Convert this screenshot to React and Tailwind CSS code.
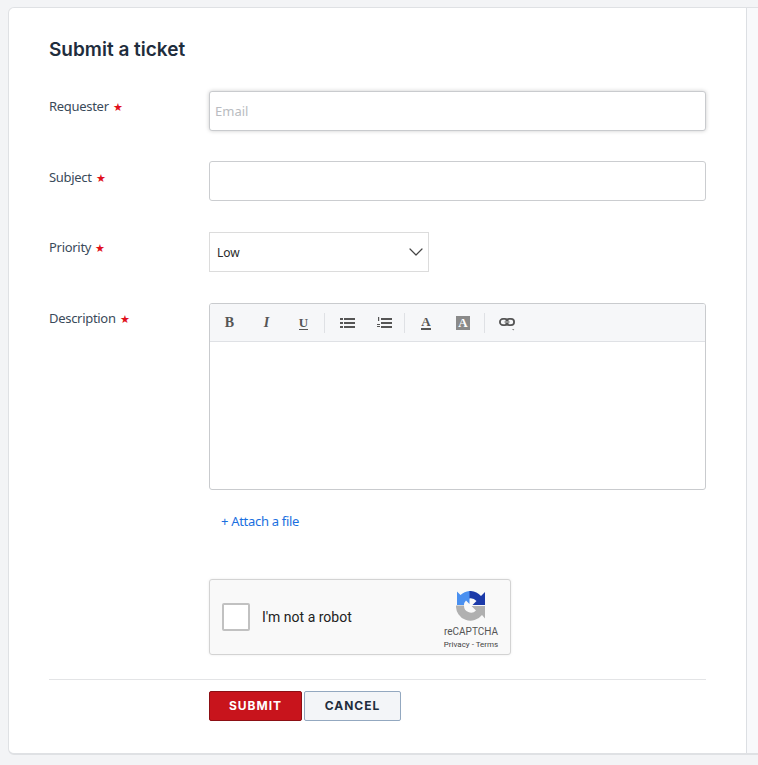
import React from "react";
import { ChevronDown } from "lucide-react";

const body = { fontFamily: '"Noto Sans", sans-serif' };

function Label({ children, extra = "pt-[5px]" }) {
  return (
    <div className={`w-40 shrink-0 ${extra} text-[13px] leading-5 tracking-[-0.3px] text-[#3a4a5a]`}>
      {children}
      <span className="ml-[4px] text-[11px] text-[#e0101c]">★</span>
    </div>
  );
}

function Tool({ children, w = "w-[37px]" }) {
  return <span className={`flex h-full ${w} items-center justify-center text-[#555]`}>{children}</span>;
}

const serif = { fontFamily: '"Liberation Serif", serif' };

function BulletIcon() {
  return (
    <svg width="15" height="10" viewBox="0 0 15 10" fill="#555">
      <rect x="0" y="0" width="3" height="2" />
      <rect x="4" y="0" width="11" height="2" />
      <rect x="0" y="4" width="3" height="2" />
      <rect x="4" y="4" width="11" height="2" />
      <rect x="0" y="8" width="3" height="2" />
      <rect x="4" y="8" width="11" height="2" />
    </svg>
  );
}

function NumberIcon() {
  return (
    <svg width="15" height="11" viewBox="0 0 15 11" fill="#555">
      <rect x="1" y="0" width="1.2" height="4" />
      <rect x="0" y="7" width="3" height="1" />
      <rect x="0" y="9" width="3" height="1" />
      <rect x="4" y="1" width="11" height="2" />
      <rect x="4" y="5" width="11" height="2" />
      <rect x="4" y="9" width="11" height="2" />
    </svg>
  );
}

function LinkIcon() {
  return (
    <svg width="16" height="14" viewBox="0 0 16 14" fill="none">
      <rect x="0.9" y="1.9" width="8" height="6.2" rx="3.1" stroke="#555" strokeWidth="1.8" />
      <rect x="7.1" y="1.9" width="8" height="6.2" rx="3.1" stroke="#555" strokeWidth="1.8" />
      <path d="M5 5h6" stroke="#f6f7f9" strokeWidth="1.6" />
      <path d="M5.5 5h5" stroke="#555" strokeWidth="1.2" />
      <path d="M13 12h2.4l-1.2 1.5z" fill="#888" />
    </svg>
  );
}

function RecaptchaLogo() {
  return (
    <svg width="30" height="30" viewBox="0 0 30 30">
      <path d="M0 14.5 A14.5 14.5 0 0 0 26 24 L29 27.5 V15 H15.5 L20 19.5 A7 7 0 0 1 8 14.5 Z" fill="#b0b0b0" />
      <path d="M13 0 A15 15 0 0 1 25 5 L29 1 V14 H16.5 L20.5 10 A8 8 0 0 0 13 7.5 Z" fill="#1c3aa9" />
      <path d="M13.5 0 A15 15 0 0 0 4.5 4 L1 0.5 V14 H8 A7 7 0 0 1 10 9.5 L13.5 13 V0 Z" fill="#4a90f0" />
    </svg>
  );
}

export default function App() {
  return (
    <div className="h-[765px] w-[758px] overflow-hidden bg-[#f3f4f6] pl-2 pt-[7px]" style={body}>
      <div className="flex h-[748px] w-[770px] overflow-hidden rounded-md border border-b-2 border-[#dfe1e4] bg-white">
        <div className="w-[738px] shrink-0 border-r border-[#dcdfe3] px-10 pt-[28px]">
          <h1
            className="text-[19px] leading-7 font-semibold text-[#1f2d3d]"
            style={{ fontFamily: "Inter, sans-serif" }}
          >
            Submit a ticket
          </h1>

          <div className="mt-[27px] flex">
            <Label>Requester</Label>
            <input
              placeholder="Email"
              className="h-10 w-[497px] rounded-[3px] border border-[#c9cbce] bg-white px-[5px] text-[13px] shadow-[0_0_4px_rgba(0,0,0,0.2)] outline-none placeholder:text-[#b9bcc1]"
            />
          </div>

          <div className="mt-[30px] flex">
            <Label extra="pt-[6px]">Subject</Label>
            <div className="h-10 w-[497px] rounded-[3px] border border-[#cbcdd0]" />
          </div>

          <div className="mt-[31px] flex">
            <Label>Priority</Label>
            <div className="flex h-10 w-[220px] items-center justify-between border border-[#dcdcdc] pl-[7px] text-xs text-[#2b2b2b]">
              <span className="pt-[2px]">Low</span>
              <ChevronDown size={24} strokeWidth={1.2} className="text-[#444]" />
            </div>
          </div>

          <div className="mt-[31px] flex">
            <Label>Description</Label>
            <div className="h-[187px] w-[497px] overflow-hidden rounded-[3px] border border-[#c9cbce]">
              <div className="flex h-[38px] items-center border-b border-[#dfe1e5] bg-[#f6f7f9] pl-[1px]">
                <Tool><span className="text-sm font-bold" style={serif}>B</span></Tool>
                <Tool><span className="text-sm font-bold italic" style={serif}>I</span></Tool>
                <Tool><span className="border-b border-[#555] text-[13px] leading-[13px] font-bold" style={serif}>U</span></Tool>
                <span className="ml-[2px] h-5 w-px bg-[#dfe1e5]" />
                <Tool w="w-[44px]"><BulletIcon /></Tool>
                <Tool w="w-[30px]"><NumberIcon /></Tool>
                <span className="ml-[5px] h-5 w-px bg-[#dfe1e5]" />
                <Tool w="w-[42px]">
                  <span className="border-b-2 border-[#555] text-[13px] leading-[13px] font-bold" style={serif}>A</span>
                </Tool>
                <Tool w="w-[32px]">
                  <span className="flex h-[14px] w-[14px] items-center justify-center bg-[#8a8a8a] text-[13px] font-bold text-white" style={serif}>A</span>
                </Tool>
                <span className="ml-[5px] h-5 w-px bg-[#dfe1e5]" />
                <span className="ml-[14px] mt-[3px] flex"><LinkIcon /></span>
              </div>
            </div>
          </div>

          <div className="ml-[172px] mt-[21px] text-[13px] leading-5 tracking-[-0.3px] text-[#1a6fe0]">+ Attach a file</div>

          <div className="ml-40 mt-12 flex h-[76px] w-[302px] items-center rounded-[3px] border border-[#d3d3d3] bg-[#f9f9f9] pl-3 pr-[11px] shadow-[0_0_3px_rgba(0,0,0,0.08)]" style={{ fontFamily: "Roboto, sans-serif" }}>
            <div className="h-7 w-7 rounded-[2px] border-2 border-[#c1c1c1] bg-white" />
            <span className="ml-3 text-sm text-[#222]">I'm not a robot</span>
            <div className="ml-auto flex w-[56px] flex-col items-center pt-[6px]">
              <RecaptchaLogo />
              <span className="mt-[5px] text-[10px] leading-3 text-[#555]">reCAPTCHA</span>
              <span className="mt-[2px] text-[8px] leading-[10px] whitespace-nowrap text-[#444]">Privacy - Terms</span>
            </div>
          </div>

          <div className="mt-6 border-t border-[#e3e4e6]" />

          <div className="ml-40 mt-[11px] flex gap-[2px]" style={{ fontFamily: "Inter, sans-serif" }}>
            <button className="h-[30px] w-[93px] rounded-[2px] border border-[#8c0f14] bg-[#c8141c] text-xs font-bold tracking-[1px] text-white">
              SUBMIT
            </button>
            <button className="h-[30px] w-[97px] rounded-[2px] border border-[#93a8c0] bg-[#f3f5f8] text-xs font-bold tracking-[1px] text-[#1f2d3d]">
              CANCEL
            </button>
          </div>
        </div>
        <div className="flex-1 bg-[#f8f9fb]" />
      </div>
    </div>
  );
}
